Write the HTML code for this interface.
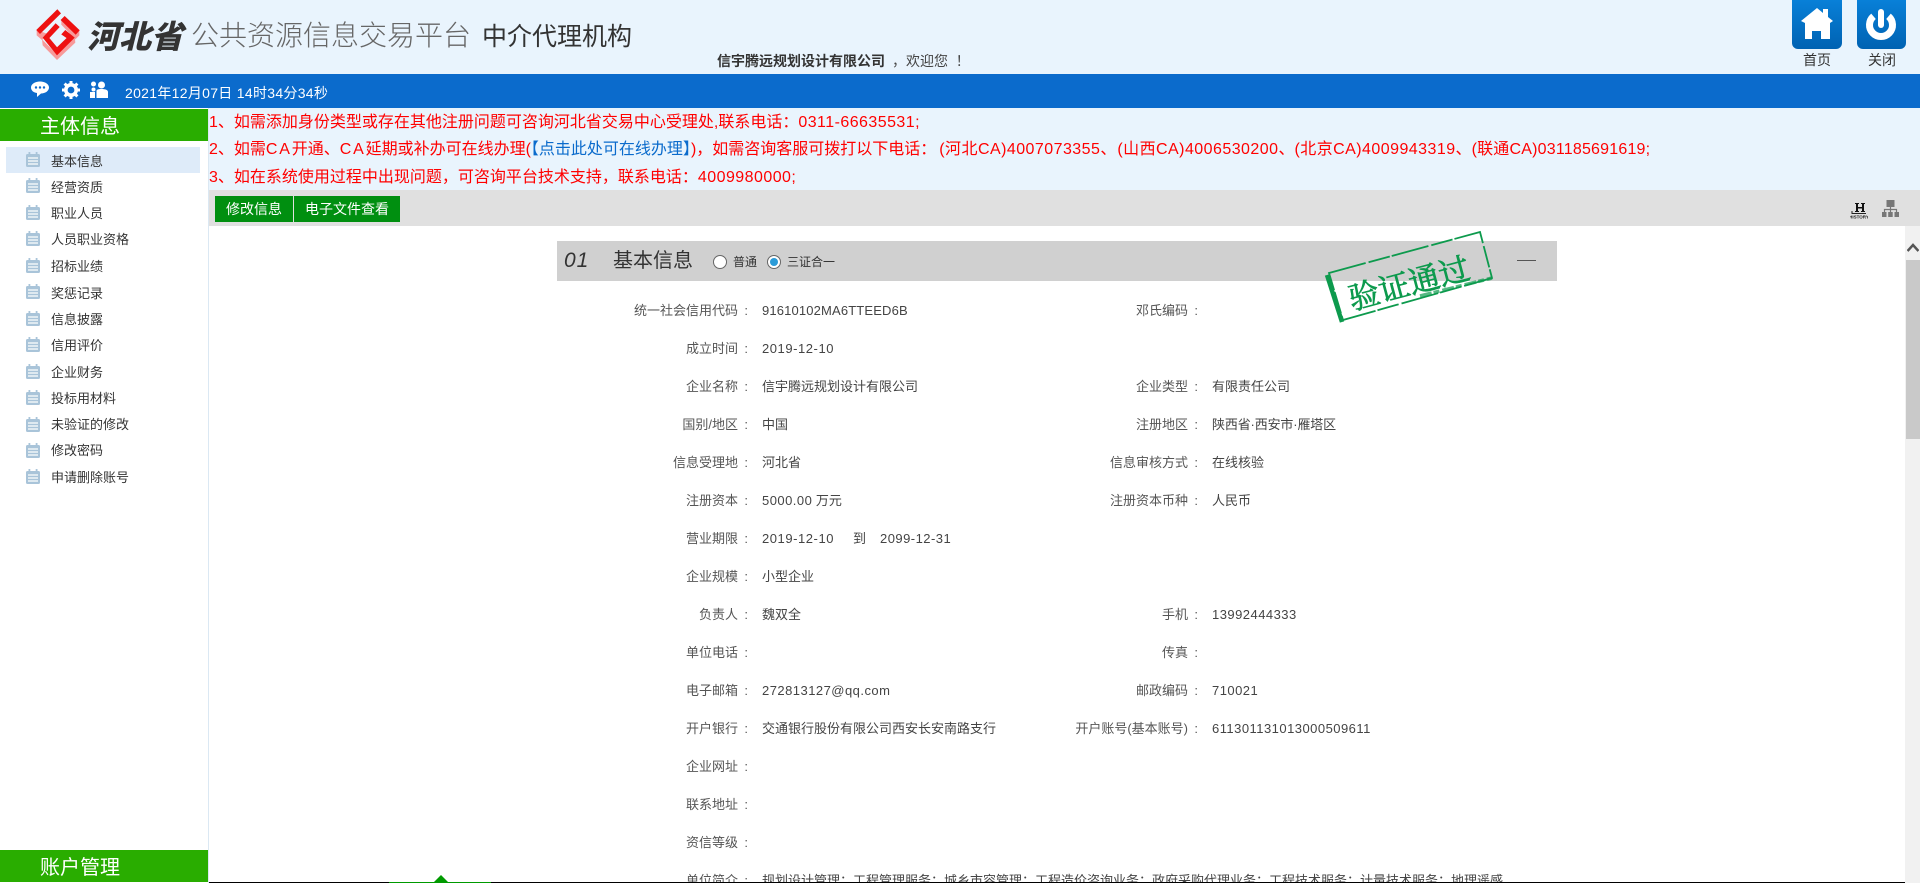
<!DOCTYPE html>
<html lang="zh-CN">
<head>
<meta charset="utf-8">
<title>中介代理机构</title>
<style>
html,body{margin:0;padding:0;width:1920px;height:883px;overflow:hidden;background:#e9f4fd;}
body{position:relative;font-family:"Liberation Sans","Noto Sans CJK SC",sans-serif;color:#333;}
.a{position:absolute;white-space:nowrap;}
.menu{position:absolute;left:51px;font-size:13px;line-height:20px;color:#333;white-space:nowrap;}
.ic{position:absolute;left:26px;width:14px;height:15px;}
.l{position:absolute;font-size:13px;line-height:20px;color:#555;text-align:right;white-space:nowrap;}
.l1{left:550px;width:201px;}
.l2{left:1000px;width:201px;}
.l i{font-style:normal;display:inline-block;width:13px;text-align:right;padding-right:3px;box-sizing:border-box;}
.v{position:absolute;font-size:13px;line-height:20px;color:#444;white-space:nowrap;}
.v1{left:762px;}
.v2{left:1212px;}
.d{letter-spacing:.47px;}
.n{position:absolute;left:209px;font-size:16px;line-height:24px;color:#f00;white-space:nowrap;}
.n .d{letter-spacing:.45px;}
.n .c{letter-spacing:1.8px;}
.g{position:absolute;left:0;width:208px;background:#29ad00;color:#fff;font-size:20px;text-align:left;text-indent:40px;}
.btn{position:absolute;top:196px;height:26px;line-height:26px;background:#008f10;color:#fff;font-size:14px;text-align:center;}
</style>
</head>
<body>

<!-- header -->
<svg class="a" style="left:32px;top:6px" width="54" height="56" viewBox="0 0 162 168">
  <polygon points="14,72 14,88 30,102 48,84" fill="#f79a9a"/>
  <polygon points="30,100 32,118 75,162 130,110 128,90 75,146" fill="#f79a9a"/>
  <polygon points="88,42 88,56 130,100 142,88 142,72" fill="#f79a9a"/>
  <polygon points="15,72 76,12 85,22 24,82" fill="#ee1111" stroke="#ee1111" stroke-width="3"/>
  <polygon points="88,42 98,32 141,73 131,84" fill="#ee1111" stroke="#ee1111" stroke-width="3"/>
  <polygon points="34,95 71,54 81,63 50,96 75,126 106,96 90,85 100,74 126,95 75,146" fill="#ee1111" stroke="#ee1111" stroke-width="3"/>
</svg>
<div class="a" style="left:87px;top:15px;font-size:32px;line-height:44px;font-weight:900;font-style:italic;color:#333;">河北省</div>
<div class="a" style="left:191px;top:16px;font-size:28px;line-height:40px;color:#666;font-weight:300;">公共资源信息交易平台</div>
<div class="a" style="left:482px;top:18px;font-size:25px;line-height:38px;color:#333;">中介代理机构</div>
<div class="a" style="left:717px;top:51px;font-size:14px;line-height:20px;font-weight:bold;color:#333;">信宇腾远规划设计有限公司</div>
<div class="a" style="left:892px;top:51px;font-size:14px;line-height:20px;color:#444;">，欢迎您&nbsp;&nbsp;！</div>

<div class="a" style="left:1792px;top:0;width:50px;height:49px;border-radius:0 0 6px 6px;background:linear-gradient(#0880d8,#0062b2);"></div>
<svg class="a" style="left:1792px;top:0" width="50" height="49" viewBox="0 0 50 49">
  <path d="M9 21 L25 8 L31 13 V9 H36 V17 L41 21 L38 23 V39 H29 V31 H20 V39 H13 V23 Z" fill="#fff"/>
</svg>
<div class="a" style="left:1857px;top:0;width:49px;height:49px;border-radius:0 0 6px 6px;background:linear-gradient(#0880d8,#0062b2);"></div>
<svg class="a" style="left:1857px;top:0" width="49" height="49" viewBox="0 0 49 49">
  <path d="M16.500 16.300 A11.500 11.500 0 1 0 31.500 16.300" fill="none" stroke="#fff" stroke-width="7"/>
  <path d="M24 12 V25" stroke="#fff" stroke-width="6" stroke-linecap="round"/>
</svg>
<div class="a" style="left:1803px;top:50px;font-size:14px;line-height:20px;color:#333;">首页</div>
<div class="a" style="left:1868px;top:50px;font-size:14px;line-height:20px;color:#333;">关闭</div>

<!-- blue bar -->
<div class="a" style="left:0;top:74px;width:1920px;height:34px;background:#0b6bcc;"></div>
<svg class="a" style="left:31px;top:81px" width="18" height="17" viewBox="0 0 18 17">
  <path d="M9 0.500 C14 0.500 18 3 18 6.500 C18 10 14 12.500 10 12.500 L6 16 L6 12 C2.500 11.500 0 9.500 0 6.500 C0 3 4 0.500 9 0.500 Z" fill="#fff"/>
  <circle cx="5" cy="6.500" r="1.200" fill="#0b6bcc"/><circle cx="9" cy="6.500" r="1.200" fill="#0b6bcc"/><circle cx="13" cy="6.500" r="1.200" fill="#0b6bcc"/>
</svg>
<svg class="a" style="left:62px;top:81px" width="18" height="18" viewBox="0 0 18 18">
  <circle cx="9" cy="9" r="5.200" fill="none" stroke="#fff" stroke-width="3.600"/>
  <path d="M9 0 V3 M9 15 V18 M0 9 H3 M15 9 H18 M2.600 2.600 L4.800 4.800 M13.200 13.200 L15.400 15.400 M15.400 2.600 L13.200 4.800 M4.800 13.200 L2.600 15.400" stroke="#fff" stroke-width="3"/>
</svg>
<svg class="a" style="left:90px;top:81px" width="18" height="17" viewBox="0 0 18 17">
  <circle cx="3.500" cy="3" r="2.500" fill="#fff"/>
  <circle cx="3.500" cy="8.500" r="2" fill="#fff"/>
  <path d="M0 11 H5 V17 H0 Z" fill="#fff"/>
  <circle cx="11.500" cy="4" r="3.500" fill="#fff"/>
  <path d="M6.500 10 C6.500 8.500 8 8 11.500 8 C15.500 8 18 9 18 11 V17 H6.500 Z" fill="#fff"/>
</svg>
<div class="a" style="left:125px;top:83px;font-size:14px;line-height:20px;letter-spacing:.3px;color:#fff;">2021年12月07日 14时34分34秒</div>

<!-- sidebar -->
<div class="a" style="left:0;top:108px;width:208px;height:775px;background:#fff;border-right:1px solid #dbe8f3;"></div>
<div class="g" style="top:109px;height:32px;line-height:36px;overflow:hidden;">主体信息</div>
<div class="a" style="left:6px;top:147px;width:194px;height:26px;background:#deebf9;"></div>
<div class="g" style="top:850px;height:32px;line-height:36px;overflow:hidden;">账户管理</div>

<svg width="0" height="0" style="position:absolute">
  <symbol id="nb" viewBox="0 0 14 15">
    <rect x="0" y="2" width="14" height="13" rx="1.500" fill="#a9c4d9"/>
    <rect x="2.500" y="0" width="1.800" height="4" fill="#a9c4d9"/>
    <rect x="9.700" y="0" width="1.800" height="4" fill="#a9c4d9"/>
    <path d="M2 6 H12 M2 9 H12 M2 12 H12" stroke="#fff" stroke-width="1.200"/>
  </symbol>
</svg>
<svg class="ic" style="top:152px"><use href="#nb"/></svg><div class="menu" style="top:152px">基本信息</div>
<svg class="ic" style="top:178px"><use href="#nb"/></svg><div class="menu" style="top:178px">经营资质</div>
<svg class="ic" style="top:205px"><use href="#nb"/></svg><div class="menu" style="top:204px">职业人员</div>
<svg class="ic" style="top:231px"><use href="#nb"/></svg><div class="menu" style="top:230px">人员职业资格</div>
<svg class="ic" style="top:258px"><use href="#nb"/></svg><div class="menu" style="top:257px">招标业绩</div>
<svg class="ic" style="top:284px"><use href="#nb"/></svg><div class="menu" style="top:284px">奖惩记录</div>
<svg class="ic" style="top:311px"><use href="#nb"/></svg><div class="menu" style="top:310px">信息披露</div>
<svg class="ic" style="top:337px"><use href="#nb"/></svg><div class="menu" style="top:336px">信用评价</div>
<svg class="ic" style="top:364px"><use href="#nb"/></svg><div class="menu" style="top:363px">企业财务</div>
<svg class="ic" style="top:390px"><use href="#nb"/></svg><div class="menu" style="top:389px">投标用材料</div>
<svg class="ic" style="top:417px"><use href="#nb"/></svg><div class="menu" style="top:415px">未验证的修改</div>
<svg class="ic" style="top:443px"><use href="#nb"/></svg><div class="menu" style="top:441px">修改密码</div>
<svg class="ic" style="top:469px"><use href="#nb"/></svg><div class="menu" style="top:468px">申请删除账号</div>

<!-- notices -->
<div class="n" style="top:111px">1、如需添加身份类型或存在其他注册问题可咨询河北省交易中心受理处,联系电话：<span class="d">0311-66635531;</span></div>
<div class="n" style="top:138px">2、如需<span class="c">CA</span>开通、<span class="c">CA</span>延期或补办可在线办理(<span style="color:#0b6bcc">【点击此处可在线办理】</span>)，如需咨询客服可拨打以下电话：<span class="d" style="padding-left:3px">(河北CA)4007073355</span>、<span class="d" style="padding-left:1px">(山西CA)4006530200</span>、<span class="d">(北京CA)4009943319</span>、<span class="d" style="letter-spacing:.2px">(联通CA)031185691619;</span></div>
<div class="n" style="top:166px">3、如在系统使用过程中出现问题，可咨询平台技术支持，联系电话：<span class="d">4009980000;</span></div>

<!-- toolbar -->
<div class="a" style="left:209px;top:190px;width:1711px;height:36px;background:#e0e0e0;"></div>
<div class="btn" style="left:215px;width:78px;">修改信息</div>
<div class="btn" style="left:294px;width:106px;">电子文件查看</div>
<svg class="a" style="left:1850px;top:202px" width="18" height="17" viewBox="0 0 18 17">
  <path d="M5 1 H9 V2 H8 V5 H12 V2 H11 V1 H15 V2 H14 V9 H15 V10 H11 V9 H12 V6.500 H8 V9 H9 V10 H5 V9 H6 V2 H5 Z" fill="#111"/>
  <path d="M2 9 V11.500 H16" fill="none" stroke="#222" stroke-width="1"/>
  <text x="9" y="16.500" text-anchor="middle" font-family="'Liberation Sans',sans-serif" font-size="4.500" font-weight="bold" fill="#222">HISTORY</text>
</svg>
<svg class="a" style="left:1882px;top:200px" width="17" height="17" viewBox="0 0 17 17">
  <rect x="4.500" y="0" width="8" height="7" fill="#777"/>
  <path d="M8.500 7 V12 M2.500 12 V9.500 H14.500 V12" fill="none" stroke="#777" stroke-width="1.200"/>
  <rect x="0" y="12" width="4.500" height="5" fill="#777"/>
  <rect x="6.200" y="12" width="4.500" height="5" fill="#777"/>
  <rect x="12.500" y="12" width="4.500" height="5" fill="#777"/>
</svg>

<!-- content -->
<div class="a" style="left:209px;top:226px;width:1696px;height:656px;background:#fff;"></div>

<div class="a" style="left:557px;top:241px;width:1000px;height:40px;background:#d0d0d0;"></div>
<div class="a" style="left:564px;top:248px;font-size:21px;line-height:26px;letter-spacing:1px;font-style:italic;color:#333;">01</div>
<div class="a" style="left:613px;top:247px;font-size:20px;line-height:28px;color:#333;">基本信息</div>
<div class="a" style="left:713px;top:255px;width:12px;height:12px;border:1px solid #666;border-radius:50%;background:#fff;"></div>
<div class="a" style="left:733px;top:252px;font-size:12px;line-height:20px;color:#333;">普通</div>
<div class="a" style="left:767px;top:255px;width:12px;height:12px;border:1px solid #666;border-radius:50%;background:#fff;"></div>
<div class="a" style="left:770px;top:258px;width:8px;height:8px;border-radius:50%;background:#2a9bd8;"></div>
<div class="a" style="left:787px;top:252px;font-size:12px;line-height:20px;color:#333;">三证合一</div>
<div class="a" style="left:1517px;top:260px;width:19px;height:1px;background:#555;"></div>

<!-- rows -->
<div class="l l1" style="top:301px">统一社会信用代码<i>:</i></div><div class="v v1" style="top:301px;letter-spacing:.15px">91610102MA6TTEED6B</div>
<div class="l l2" style="top:301px">邓氏编码<i>:</i></div>
<div class="l l1" style="top:339px">成立时间<i>:</i></div><div class="v v1 d" style="top:339px;letter-spacing:.55px">2019-12-10</div>
<div class="l l1" style="top:377px">企业名称<i>:</i></div><div class="v v1" style="top:377px">信宇腾远规划设计有限公司</div>
<div class="l l2" style="top:377px">企业类型<i>:</i></div><div class="v v2" style="top:377px">有限责任公司</div>
<div class="l l1" style="top:415px">国别/地区<i>:</i></div><div class="v v1" style="top:415px">中国</div>
<div class="l l2" style="top:415px">注册地区<i>:</i></div><div class="v v2" style="top:415px;letter-spacing:-.15px">陕西省·西安市·雁塔区</div>
<div class="l l1" style="top:453px">信息受理地<i>:</i></div><div class="v v1" style="top:453px">河北省</div>
<div class="l l2" style="top:453px">信息审核方式<i>:</i></div><div class="v v2" style="top:453px">在线核验</div>
<div class="l l1" style="top:491px">注册资本<i>:</i></div><div class="v v1" style="top:491px"><span class="d">5000.00</span> 万元</div>
<div class="l l2" style="top:491px">注册资本币种<i>:</i></div><div class="v v2" style="top:491px">人民币</div>
<div class="l l1" style="top:529px">营业期限<i>:</i></div><div class="v v1 d" style="top:529px;letter-spacing:.55px">2019-12-10</div><div class="v" style="left:853px;top:529px">到</div><div class="v d" style="left:880px;top:529px">2099-12-31</div>
<div class="l l1" style="top:567px">企业规模<i>:</i></div><div class="v v1" style="top:567px">小型企业</div>
<div class="l l1" style="top:605px">负责人<i>:</i></div><div class="v v1" style="top:605px">魏双全</div>
<div class="l l2" style="top:605px">手机<i>:</i></div><div class="v v2 d" style="top:605px">13992444333</div>
<div class="l l1" style="top:643px">单位电话<i>:</i></div>
<div class="l l2" style="top:643px">传真<i>:</i></div>
<div class="l l1" style="top:681px">电子邮箱<i>:</i></div><div class="v v1 d" style="top:681px">272813127@qq.com</div>
<div class="l l2" style="top:681px">邮政编码<i>:</i></div><div class="v v2 d" style="top:681px">710021</div>
<div class="l l1" style="top:719px">开户银行<i>:</i></div><div class="v v1" style="top:719px">交通银行股份有限公司西安长安南路支行</div>
<div class="l l2" style="top:719px">开户账号(基本账号)<i>:</i></div><div class="v v2 d" style="top:719px">611301131013000509611</div>
<div class="l l1" style="top:757px">企业网址<i>:</i></div>
<div class="l l1" style="top:795px">联系地址<i>:</i></div>
<div class="l l1" style="top:833px">资信等级<i>:</i></div>
<div class="l l1" style="top:871px">单位简介<i>:</i></div><div class="v v1" style="top:871px">规划设计管理；工程管理服务；城乡市容管理；工程造价咨询业务；政府采购代理业务；工程技术服务；计量技术服务；地理遥感</div>

<!-- stamp -->
<svg class="a" style="left:1320px;top:225px" width="180" height="105" viewBox="1320 225 180 105">
  <polygon points="1329,273 1480,232 1492,278 1343,320" fill="none" stroke="#0d9a4d" stroke-width="1.800" stroke-dasharray="38 3 22 2"/>
  <path d="M1327 275 L1342 322" stroke="#0d9a4d" stroke-width="4.500" fill="none"/>
  <path d="M1420 296 L1492 278" stroke="#0d9a4d" stroke-width="3.500" stroke-dasharray="12 2 6 3" opacity=".7" fill="none"/>
  <text transform="translate(1352,310) rotate(-15)" font-family="'Liberation Serif','Noto Serif CJK SC',serif" font-size="31" fill="#0d9a4d" stroke="#0d9a4d" stroke-width=".7" textLength="124">验证通过</text>
</svg>

<!-- scrollbar -->
<div class="a" style="left:1905px;top:226px;width:15px;height:657px;background:#f1f1f1;"></div>
<div class="a" style="left:1906px;top:260px;width:14px;height:179px;background:#c9c9c9;"></div>
<svg class="a" style="left:1907px;top:242px" width="12" height="11" viewBox="0 0 12 11">
  <path d="M0.500 9 L6 3 L11.500 9" fill="none" stroke="#555" stroke-width="2.500"/>
</svg>

<!-- bottom bar -->
<div class="a" style="left:209px;top:882px;width:1696px;height:1px;background:#000;"></div>
<div class="a" style="left:389px;top:882px;width:102px;height:1px;background:#009a00;"></div>
<svg class="a" style="left:433px;top:875px" width="16" height="8" viewBox="0 0 16 8"><polygon points="8,0 16,8 0,8" fill="#009a00"/></svg>

</body>
</html>
